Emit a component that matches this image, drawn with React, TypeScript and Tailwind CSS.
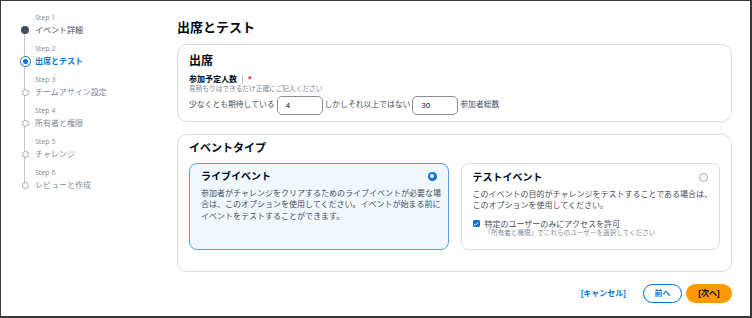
const steps = [
  { n: 1, label: "イベント詳細", state: "done" },
  { n: 2, label: "出席とテスト", state: "active" },
  { n: 3, label: "チームアサイン設定", state: "todo" },
  { n: 4, label: "所有者と権限", state: "todo" },
  { n: 5, label: "チャレンジ", state: "todo" },
  { n: 6, label: "レビューと作成", state: "todo" },
];

const font = "font-['Open_Sans','Noto_Sans_CJK_JP',sans-serif]";

const StepDot = ({ state }: { state: string }) => {
  if (state === "done")
    return <span className="h-[8px] w-[8px] rounded-full bg-[#414d5c]" />;
  if (state === "active")
    return (
      <span className="flex h-[11px] w-[11px] items-center justify-center rounded-full border-[1.5px] border-[#0972d3] bg-white">
        <span className="h-[5px] w-[5px] rounded-full bg-[#0972d3]" />
      </span>
    );
  return <span className="h-[7px] w-[7px] rounded-full border border-[#9ba7b6] bg-white" />;
};

const Sidebar = () => (
  <div className="relative w-[176px] shrink-0 pt-[12px] pl-[18px]">
    <div className="absolute left-[23px] top-[29px] h-[156px] w-px bg-[#c6c6cd]" />
    {steps.map((s) => (
      <div key={s.n} className="mb-[7px] flex flex-col">
        <span className="ml-[16px] text-[7px] leading-[10px] text-[#7d8998]">Step {s.n}</span>
        <div className="flex items-center">
          <span className="relative flex w-[12px] items-center justify-center">
            <StepDot state={s.state} />
          </span>
          <span
            className={
              "ml-[4px] text-[8px] leading-[14px] " +
              (s.state === "active"
                ? "font-bold text-[#0972d3]"
                : s.state === "done"
                  ? "text-[#414d5c]"
                  : "text-[#7d8998]")
            }
          >
            {s.label}
          </span>
        </div>
      </div>
    ))}
  </div>
);

const NumberInput = ({ value }: { value: string }) => (
  <div className="flex h-[19px] w-[46px] items-center rounded-[5px] border border-[#8c8c94] bg-white pl-[8px] text-[8px] text-[#000716]">
    {value}
  </div>
);

export default function App() {
  return (
    <div
      className={`${font} flex h-[318px] w-[752px] border-t border-l border-r-2 border-b-2 border-[#3a3a3a] bg-white text-[#000716]`}
    >
      <Sidebar />
      <div className="flex w-[555px] flex-col pt-[17px]">
        <h1 className="text-[13px] font-bold leading-[18px]">出席とテスト</h1>

        <section className="mt-[8px] rounded-[10px] border border-[#dcdcdf] px-[11px] pt-[8px] pb-[6px]">
          <h2 className="text-[12px] font-bold leading-[16px]">出席</h2>
          <div className="mt-[5px] flex items-center text-[8px] font-bold leading-[10px]">
            参加予定人数
            <span className="mx-[5px] h-[9px] w-px bg-[#c6c6cd]" />
            <span className="text-[7px] text-[#d91515]">*</span>
          </div>
          <p className="text-[6.7px] leading-[9px] text-[#7d8998]">
            見積もりはできるだけ正確にご記入ください
          </p>
          <div className="mt-[2.5px] flex items-center gap-[2px] text-[7.8px] text-[#414d5c]">
            <span>少なくとも期待している</span>
            <NumberInput value="4" />
            <span>しかしそれ以上ではない</span>
            <NumberInput value="30" />
            <span>参加者総数</span>
          </div>
        </section>

        <section className="mt-[12px] rounded-[10px] border border-[#dcdcdf] px-[11px] pt-[6px] pb-[21px]">
          <h2 className="text-[11px] font-bold leading-[14px]">イベントタイプ</h2>
          <div className="mt-[8px] grid grid-cols-2 gap-[12px]">
            <div className="h-[87px] rounded-[8px] border-[1.5px] border-[#539fe5] bg-[#f0f8fe] pl-[11px] pr-[5px] pt-[6px]">
              <div className="flex items-center justify-between pr-[6px]">
                <span className="text-[10px] font-bold leading-[13px]">ライブイベント</span>
                <span className="flex h-[9px] w-[9px] items-center justify-center rounded-full bg-[#0972d3]">
                  <span className="h-[3.5px] w-[3.5px] rounded-full bg-white" />
                </span>
              </div>
              <p className="mt-[4px] text-[8px] leading-[11.7px] text-[#414d5c]">
                参加者がチャレンジをクリアするためのライブイベントが必要な場合は、このオプションを使用してください。イベントが始まる前にイベントをテストすることができます。
              </p>
            </div>
            <div className="h-[87px] rounded-[8px] border border-[#dcdcdf] bg-white pl-[11px] pr-[5px] pt-[7px]">
              <div className="flex items-center justify-between pr-[6px]">
                <span className="text-[10px] font-bold leading-[13px]">テストイベント</span>
                <span className="h-[9px] w-[9px] rounded-full border border-[#9ba7b6] bg-white" />
              </div>
              <p className="mt-[4px] text-[8px] leading-[11px] text-[#414d5c]">
                このイベントの目的がチャレンジをテストすることである場合は、このオプションを使用してください。
              </p>
              <div className="mt-[9px] flex items-start">
                <span className="mt-[1.5px] flex h-[7px] w-[7px] items-center justify-center rounded-[1.5px] bg-[#0972d3]">
                  <svg viewBox="0 0 8 8" className="h-[6px] w-[6px]">
                    <path d="M1.5 4.2 L3.2 5.8 L6.5 2.2" fill="none" stroke="white" strokeWidth="1.3" />
                  </svg>
                </span>
                <div className="ml-[5px] flex flex-col">
                  <span className="text-[8px] leading-[10px] text-[#414d5c]">
                    特定のユーザーのみにアクセスを許可
                  </span>
                  <span className="text-[6.6px] leading-[8px] text-[#7d8998]">
                    「所有者と権限」でこれらのユーザーを選択してください
                  </span>
                </div>
              </div>
            </div>
          </div>
        </section>

        <div className="mt-[12px] flex items-center justify-end">
          <span className="mr-[17px] text-[8px] font-bold text-[#0972d3]">[キャンセル]</span>
          <button className="flex h-[19px] w-[39px] items-center justify-center rounded-full border border-[#0972d3] text-[8px] font-bold text-[#0972d3]">
            前へ
          </button>
          <button className="ml-[4px] flex h-[19px] w-[46px] items-center justify-center rounded-full bg-[#ff9900] text-[8px] font-bold text-[#000716]">
            [次へ]
          </button>
        </div>
      </div>
    </div>
  );
}
